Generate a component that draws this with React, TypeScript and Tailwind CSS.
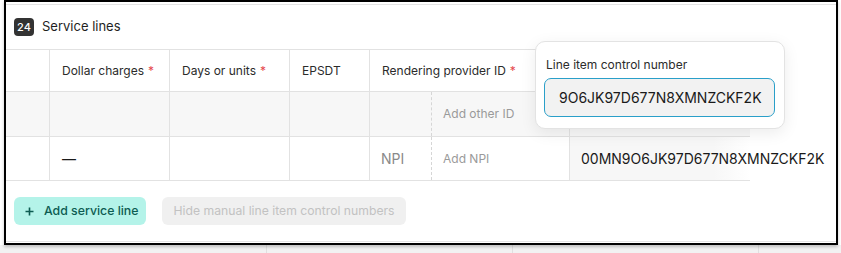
import React from "react";

const Req = () => <span className="text-[#e5484d] ml-[4px]">*</span>;

export default function App() {
  return (
    <div className="relative w-[841px] h-[253px] bg-white flex flex-col overflow-hidden" style={{ fontFamily: "Inter, 'Noto Sans', sans-serif" }}>
      <div className="ml-[4px] w-[834px] h-[245px] border-2 border-black bg-white flex flex-col shadow-[0_2px_3px_rgba(0,0,0,0.22)] z-10">
        <div className="h-[2px]" />
        <div className="border-t border-[#e4e4e4]" />
        <div className="h-[44px] flex items-center pl-[8px] gap-[8px]">
          <div className="w-[20px] h-[18px] rounded-[4px] bg-[#333333] text-white text-[11px] font-medium flex items-center justify-center">24</div>
          <div className="text-[13px] font-normal text-[#1f1f1f]">Service lines</div>
        </div>
        <div className="w-[744px] border-t border-[#e2e2e2] text-[12px] text-[#2b2b2b]">
          {/* header row */}
          <div className="grid grid-cols-[44px_120px_120px_80px_200px_180px] h-[42px] border-b border-[#e2e2e2]">
            <div className="border-r border-[#e2e2e2]" />
            <div className="border-r border-[#e2e2e2] flex items-center pl-[12px]">Dollar charges<Req /></div>
            <div className="border-r border-[#e2e2e2] flex items-center pl-[12px]">Days or units<Req /></div>
            <div className="border-r border-[#e2e2e2] flex items-center pl-[12px]">EPSDT</div>
            <div className="border-r border-[#e2e2e2] flex items-center pl-[12px]">Rendering provider ID<Req /></div>
            <div />
          </div>
          {/* row 2 */}
          <div className="grid grid-cols-[44px_120px_120px_80px_62px_138px_180px] h-[45px] border-b border-[#e2e2e2] bg-[#f7f7f7]">
            <div className="border-r border-[#e2e2e2]" />
            <div className="border-r border-[#e2e2e2]" />
            <div className="border-r border-[#e2e2e2]" />
            <div className="border-r border-[#e2e2e2]" />
            <div className="border-r border-dashed border-[#d6d6d6]" />
            <div className="border-r border-[#e2e2e2] flex items-center pl-[11px] text-[#9a9a9a]">Add other ID</div>
            <div />
          </div>
          {/* row 3 */}
          <div className="grid grid-cols-[44px_120px_120px_80px_62px_138px_180px] h-[44px] border-b border-[#e2e2e2]">
            <div className="border-r border-[#e2e2e2]" />
            <div className="border-r border-[#e2e2e2] flex items-center pl-[12px] text-[14px] text-[#1a1a1a]">—</div>
            <div className="border-r border-[#e2e2e2]" />
            <div className="border-r border-[#e2e2e2]" />
            <div className="border-r border-dashed border-[#d6d6d6] flex items-center pl-[11px] text-[14px] text-[#8a8a8a]">NPI</div>
            <div className="border-r border-[#e2e2e2] flex items-center pl-[11px] text-[#9a9a9a]">Add NPI</div>
            <div className="flex items-center pl-[11px] text-[14px] text-[#1a1a1a] whitespace-nowrap bg-[linear-gradient(to_right,#f7f7f7_80%,#ffffff)]">00MN9O6JK97D677N8XMNZCKF2K</div>
          </div>
        </div>
        <div className="mt-[16px] pl-[8px] flex gap-[16px]">
          <div className="h-[28px] w-[132px] rounded-[6px] bg-[#b4f3e9] text-[#0d5c52] text-[12.3px] font-medium flex items-center pl-[11px] gap-[10px]">
            <svg width="9" height="9" viewBox="0 0 9 9"><path d="M4.5 0.5v8M0.5 4.5h8" stroke="#0d5c52" strokeWidth="1.6" /></svg>
            <span>Add service line</span>
          </div>
          <div className="h-[28px] w-[244px] rounded-[6px] bg-[#f0f0f0] text-[#c2c2c2] text-[12.2px] flex items-center justify-center">Hide manual line item control numbers</div>
        </div>
        <div className="mt-auto mb-[1px] border-b border-[#e4e4e4]" />
      </div>
      <div className="flex-1 bg-[#f2f2f2] flex">
        <div className="w-[267px] border-r border-[#e0e0e0]" />
        <div className="w-[246px] border-r border-[#e0e0e0]" />
        <div className="w-[246px] border-r border-[#e0e0e0]" />
      </div>
      <div className="absolute left-[535px] top-[41px] w-[250px] h-[88px] rounded-[10px] border border-[#e3e3e3] bg-white shadow-[0_4px_16px_rgba(0,0,0,0.08)] z-20">
        <div className="pl-[10px] pt-[15px] text-[12px] text-[#2b2b2b] leading-[16px]">Line item control number</div>
        <div className="ml-[8px] mt-[5px] w-[231px] h-[39px] rounded-[7px] border border-[#2a9fc9] bg-[#f2f2f2] flex items-center pl-[14px] text-[14px] text-[#1a1a1a]">9O6JK97D677N8XMNZCKF2K</div>
      </div>
    </div>
  );
}
